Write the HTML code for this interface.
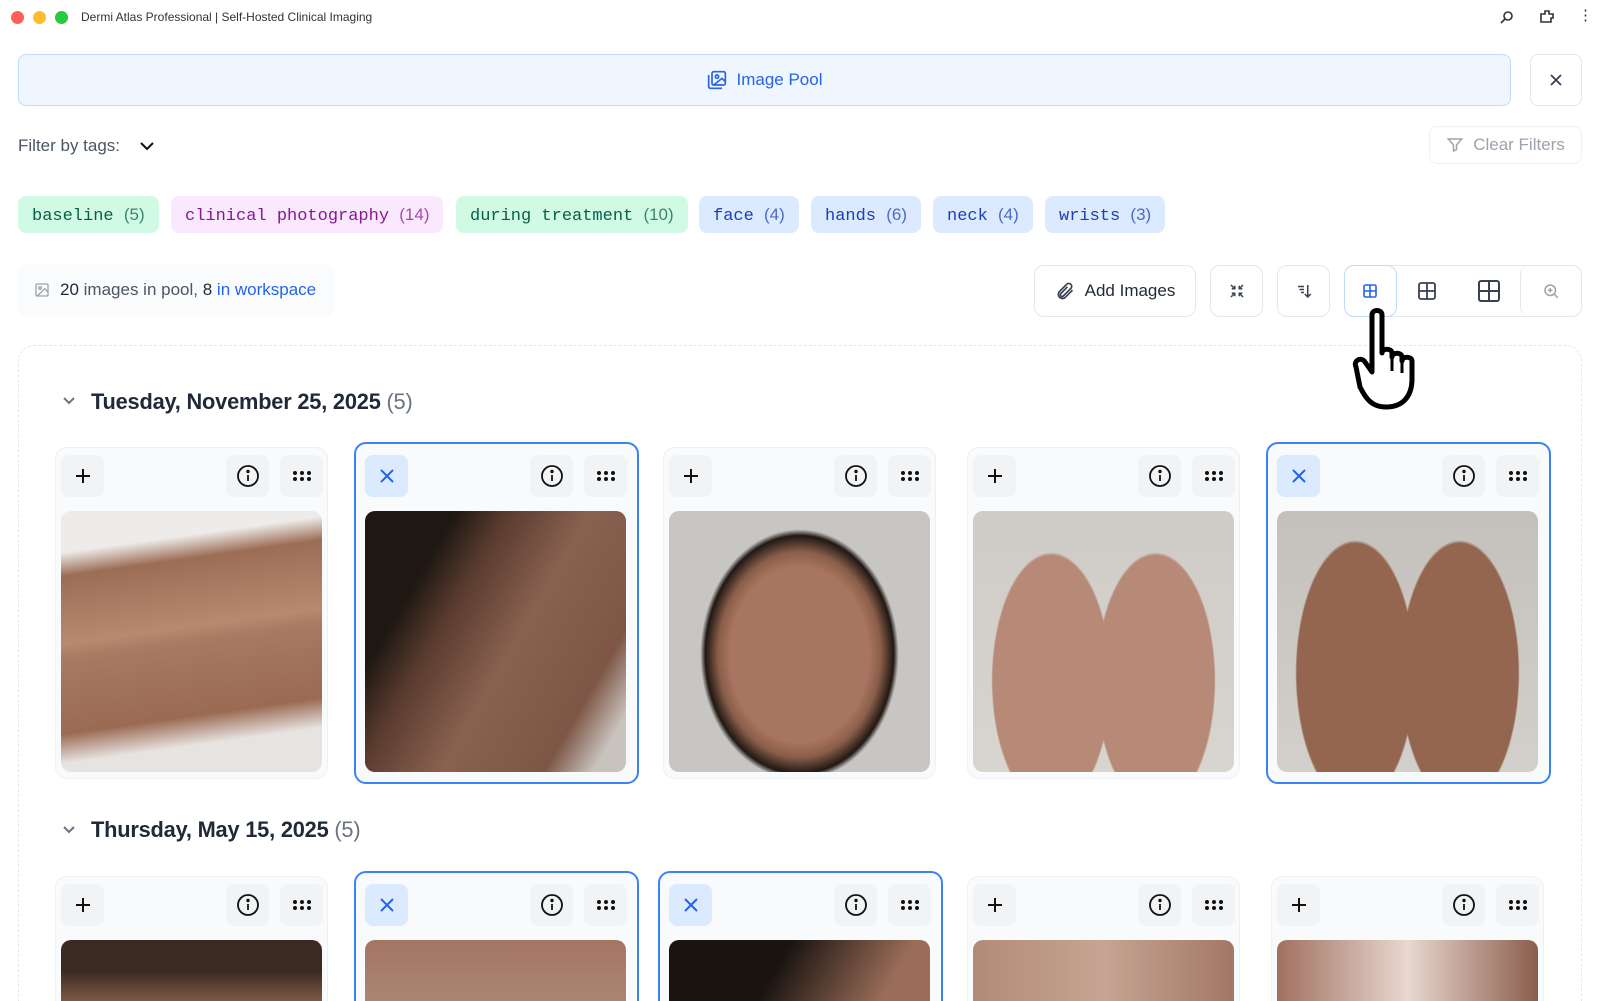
<!DOCTYPE html>
<html><head><meta charset="utf-8"><style>
*{box-sizing:border-box;margin:0;padding:0}
html,body{width:1600px;height:1001px;overflow:hidden}
body{background:#fff;font-family:"Liberation Sans",sans-serif;color:#1f2937}
#w{position:relative;width:1600px;height:1001px;overflow:hidden}
.a{position:absolute}
.dot{position:absolute;top:11px;width:13px;height:13px;border-radius:50%}
.tag{position:absolute;top:196px;height:37px;border-radius:8px;font-family:"Liberation Mono",monospace;font-size:17px;line-height:37px;padding:0 14px}
.tag span{font-family:"Liberation Sans",sans-serif;opacity:.75}
.btn{position:absolute;top:265px;height:52px;border:1px solid #e5e7eb;border-radius:10px;background:#fff;display:flex;align-items:center;justify-content:center}
.card{position:absolute;width:273px;height:332px;border:1px solid #eef0f3;border-radius:12px;background:#f9fafb}
.card.sel{border:2px solid #3b82f6;width:285px;height:342px}
.ib{position:absolute;top:7px;width:43px;height:42px;border-radius:8px;background:#f1f3f5;display:flex;align-items:center;justify-content:center}
.img{position:absolute;left:5px;top:63px;width:261px;height:261px;border-radius:10px;overflow:hidden}
.sel .ib{top:11px}.sel .img{left:9px;top:67px}
h2{position:absolute;font-size:21.8px;font-weight:bold;color:#1f2937;letter-spacing:-0.2px}
h2 span{font-weight:normal;color:#6b7280}
</style></head><body><div id="w">
<div class="dot" style="left:11px;background:#ff5f57"></div>
<div class="dot" style="left:33px;background:#febc2e"></div>
<div class="dot" style="left:55px;background:#28c840"></div>
<div class="a" style="left:81px;top:10px;font-size:12px;color:#333">Dermi Atlas Professional | Self-Hosted Clinical Imaging</div>
<svg class="a" style="left:1500px;top:10px" width="14" height="14" viewBox="0 0 14 14" fill="none" stroke="#333" stroke-width="1.6"><circle cx="8" cy="6" r="4"/><path d="M5 9l-4 4"/></svg>
<svg class="a" style="left:1538px;top:8px" width="18" height="18" viewBox="0 0 18 18" fill="none" stroke="#333" stroke-width="1.6"><path d="M3 6h4V3h4v3h4v4h-2v4H3z"/></svg>
<div class="a" style="left:1578px;top:6px;font-size:15px;color:#333">⋮</div>

<div class="a" style="left:18px;top:54px;width:1493px;height:52px;background:#eff6ff;border:1px solid #bfdbfe;border-radius:8px;display:flex;align-items:center;justify-content:center;color:#2563eb;font-size:17px;font-weight:500">
<svg width="20" height="20" viewBox="0 0 24 24" fill="none" stroke="#2563eb" stroke-width="2" style="margin-right:10px"><rect x="6" y="2" width="16" height="16" rx="2"/><path d="M2 6v14a2 2 0 0 0 2 2h14"/><circle cx="12" cy="8" r="2"/><path d="M22 14l-4-4-10 8"/></svg>Image Pool</div>
<div class="a" style="left:1530px;top:54px;width:52px;height:52px;border:1px solid #e5e7eb;border-radius:8px;display:flex;align-items:center;justify-content:center"><svg width="16" height="16" viewBox="0 0 16 16" stroke="#374151" stroke-width="1.8"><path d="M3 3l10 10M13 3L3 13"/></svg></div>

<div class="a" style="left:18px;top:136px;font-size:17px;color:#4b5563">Filter by tags:</div>
<svg class="a" style="left:138px;top:138px" width="18" height="16" viewBox="0 0 18 16" fill="none" stroke="#111" stroke-width="2"><path d="M3 5l6 6 6-6"/></svg>
<div class="a" style="left:1429px;top:126px;width:153px;height:38px;border:1px solid #f0f1f3;border-radius:8px;display:flex;align-items:center;justify-content:center;color:#9ca3af;font-size:17px"><svg width="18" height="18" viewBox="0 0 24 24" fill="none" stroke="#9ca3af" stroke-width="2" style="margin-right:9px"><path d="M3 4h18l-7 8v6l-4 2v-8z"/></svg>Clear Filters</div>

<div class="tag" style="left:18px;background:#d1fae5;color:#065f46">baseline <span>(5)</span></div>
<div class="tag" style="left:171px;background:#fae8ff;color:#86198f">clinical photography <span>(14)</span></div>
<div class="tag" style="left:456px;background:#d1fae5;color:#065f46">during treatment <span>(10)</span></div>
<div class="tag" style="left:699px;background:#dbeafe;color:#1e40af">face <span>(4)</span></div>
<div class="tag" style="left:811px;background:#dbeafe;color:#1e40af">hands <span>(6)</span></div>
<div class="tag" style="left:933px;background:#dbeafe;color:#1e40af">neck <span>(4)</span></div>
<div class="tag" style="left:1045px;background:#dbeafe;color:#1e40af">wrists <span>(3)</span></div>

<div class="a" style="left:18px;top:264px;width:316px;height:52px;background:#fafbfc;border-radius:8px;display:flex;align-items:center;padding-left:16px;font-size:17px;color:#4b5563">
<svg width="16" height="16" viewBox="0 0 24 24" fill="none" stroke="#9ca3af" stroke-width="2" style="margin-right:10px"><rect x="3" y="3" width="18" height="18" rx="2"/><circle cx="9" cy="9" r="2"/><path d="M21 15l-5-5L5 21"/></svg><b style="color:#1f2937;font-weight:500">20</b>&nbsp;images in pool,&nbsp;<b style="color:#1f2937;font-weight:500">8</b>&nbsp;<span style="color:#2563eb">in workspace</span></div>

<div class="btn" style="left:1034px;width:162px;font-size:17px;color:#1f2937"><svg width="20" height="20" viewBox="0 0 24 24" fill="none" stroke="#374151" stroke-width="2" style="margin-right:10px"><path d="M21 11l-9 9a5 5 0 0 1-7-7l9-9a3.5 3.5 0 0 1 5 5l-9 9a2 2 0 0 1-3-3l8-8"/></svg>Add Images</div>
<div class="btn" style="left:1210px;width:53px"><svg width="18" height="18" viewBox="0 0 24 24" fill="none" stroke="#374151" stroke-width="2"><path d="M4 4l5 5M9 5v4H5M20 4l-5 5M15 5v4h4M4 20l5-5M5 15h4v4M20 20l-5-5M19 15h-4v4"/></svg></div>
<div class="btn" style="left:1277px;width:53px"><svg width="18" height="18" viewBox="0 0 24 24" fill="none" stroke="#374151" stroke-width="2"><path d="M4 6h8M6 10h6M8 14h4M17 4v16M13 16l4 4 4-4"/></svg></div>
<div class="btn" style="left:1344px;width:238px;justify-content:flex-start">
<div style="width:53px;height:52px;border:1px solid #bfdbfe;border-radius:10px;margin-left:-1px;display:flex;align-items:center;justify-content:center"><svg width="14" height="14" viewBox="0 0 14 14" fill="none" stroke="#2563eb" stroke-width="1.6"><rect x="1" y="1" width="12" height="12" rx="1.5"/><path d="M7 1v12M1 7h12"/></svg></div>
<div style="width:62px;display:flex;justify-content:center"><svg width="18" height="18" viewBox="0 0 18 18" fill="none" stroke="#374151" stroke-width="1.8"><rect x="1" y="1" width="16" height="16" rx="2"/><path d="M9 1v16M1 9h16"/></svg></div>
<div style="width:62px;display:flex;justify-content:center"><svg width="22" height="22" viewBox="0 0 22 22" fill="none" stroke="#374151" stroke-width="2"><rect x="1" y="1" width="20" height="20" rx="2"/><path d="M11 1v20M1 11h20"/></svg></div>
<div style="width:62px;height:52px;border-left:1px solid #e5e7eb;border-radius:10px;display:flex;align-items:center;justify-content:center"><svg width="18" height="18" viewBox="0 0 24 24" fill="none" stroke="#9ca3af" stroke-width="2"><circle cx="11" cy="11" r="7"/><path d="M21 21l-5-5M11 8v6M8 11h6"/></svg></div>
</div>

<div class="a" style="left:18px;top:345px;width:1564px;height:700px;border:1px dashed #e5e7eb;border-radius:16px"></div>

<svg class="a" style="left:61px;top:393px" width="16" height="16" viewBox="0 0 16 16" fill="none" stroke="#6b7280" stroke-width="2"><path d="M3 5l5 5 5-5"/></svg>
<h2 style="left:91px;top:389px">Tuesday, November 25, 2025 <span>(5)</span></h2>
<svg class="a" style="left:61px;top:822px" width="16" height="16" viewBox="0 0 16 16" fill="none" stroke="#6b7280" stroke-width="2"><path d="M3 5l5 5 5-5"/></svg>
<h2 style="left:91px;top:817px">Thursday, May 15, 2025 <span>(5)</span></h2>

<div id="cards"></div>
<script>
var plus='<svg width="18" height="18" viewBox="0 0 18 18" stroke="#111" stroke-width="2"><path d="M9 2v14M2 9h14"/></svg>';
var x='<svg width="18" height="18" viewBox="0 0 18 18" stroke="#2563eb" stroke-width="2"><path d="M3 3l12 12M15 3L3 15"/></svg>';
var info='<svg width="24" height="24" viewBox="0 0 24 24" fill="none" stroke="#111" stroke-width="1.8"><circle cx="12" cy="12" r="10"/><path d="M12 11v6"/><circle cx="12" cy="7.5" r=".8" fill="#111"/></svg>';
var dots='<svg width="20" height="12" viewBox="0 0 20 12" fill="#111"><circle cx="3" cy="3" r="2"/><circle cx="10" cy="3" r="2"/><circle cx="17" cy="3" r="2"/><circle cx="3" cy="9" r="2"/><circle cx="10" cy="9" r="2"/><circle cx="17" cy="9" r="2"/></svg>';
var imgs=[
'linear-gradient(172deg,#eeecea 0 14%,#9c6d55 22%,#b78a70 45%,#a87a62 50%,#9a6a52 75%,#e6e3e0 85%)',
'linear-gradient(120deg,#1e1712 0 22%,#5a3c2f 35%,#8a6150 55%,#7d5646 80%,#c9c3be 92%)',
'radial-gradient(ellipse 38% 48% at 50% 55%,#a87560 0 70%,#8a5e4a 82%,#201814 95%,transparent 100%),linear-gradient(#c8c6c3,#c8c6c3)',
'radial-gradient(ellipse 28% 60% at 30% 65%,#b68a76 0 80%,transparent 82%),radial-gradient(ellipse 28% 60% at 70% 65%,#b68a76 0 80%,transparent 82%),linear-gradient(#cfcbc6,#d8d5d0)',
'radial-gradient(ellipse 28% 62% at 30% 62%,#946650 0 80%,transparent 82%),radial-gradient(ellipse 28% 62% at 70% 62%,#946650 0 80%,transparent 82%),linear-gradient(#c4c0bb,#d3d0cc)'];
var imgs2=['linear-gradient(#3a2a22 0 12%,#a7745e 30%)','linear-gradient(#a37563,#c8b8ae)','linear-gradient(120deg,#1a1410 0 30%,#9a6d58 60%)','linear-gradient(90deg,#b38a78,#c7a493 50%,#a37765)','linear-gradient(90deg,#a07060,#e8d8d0 50%,#8a5e4c)'];
var sel1=[0,1,0,0,1],sel2=[0,1,1,0,0],h='';
function row(y,sel,im){for(var i=0;i<5;i++){var l=55+i*304,s=sel[i];var L=s?l-5:l,T=s?y-5:y;
h+='<div class="card'+(s?' sel':'')+'" style="left:'+L+'px;top:'+T+'px">'+
'<div class="ib" style="left:'+(s?9:5)+'px;'+(s?'background:#dbeafe':'')+'">'+(s?x:plus)+'</div>'+
'<div class="ib" style="left:'+(s?174:170)+'px">'+info+'</div>'+
'<div class="ib" style="left:'+(s?228:224)+'px">'+dots+'</div>'+
'<div class="img" style="background:'+im[i]+'"></div></div>';}}
row(447,sel1,imgs);row(876,sel2,imgs2);
document.getElementById('cards').innerHTML=h;
</script>
<svg class="a" style="left:1350px;top:305px" width="80" height="105" viewBox="0 0 80 105"><path d="M22 10c0-6 10-6 10 0v38c0-5 10-5 10 0v4c0-5 10-5 10 0v4c0-5 10-5 10 0v18c0 16-8 28-26 28-14 0-20-8-26-20L6 62c-3-6 5-11 9-5l7 10z" fill="#fff" stroke="#000" stroke-width="5" stroke-linejoin="round"/><path d="M42 52v14M52 56v12" stroke="#000" stroke-width="3"/></svg>
</div></body></html>
